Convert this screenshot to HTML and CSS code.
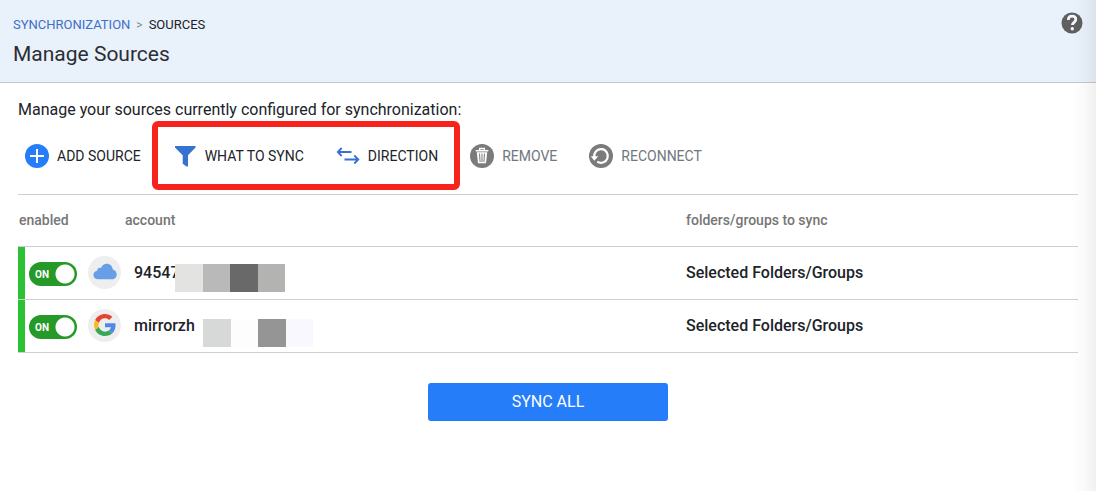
FILE: index.html
```html
<!DOCTYPE html>
<html lang="en">
<head>
<meta charset="utf-8">
<meta name="viewport" content="width=device-width, initial-scale=1">
<title>Manage Sources</title>
<link rel="stylesheet" href="styles.css">
</head>
<body>
<header class="page-header">
  <div>
    <nav class="breadcrumb" aria-label="Breadcrumb">
      <a href="#sync">SYNCHRONIZATION</a><span class="separator">&gt;</span><span>SOURCES</span>
    </nav>
    <h1 class="title">Manage Sources</h1>
  </div>
  <button class="help" type="button" aria-label="Help">
    <svg width="22" height="22" viewBox="0 0 22 22"><circle cx="11" cy="11" r="10.5" fill="#5f5f5f"/><path d="M7.300 8C7.300 5.500 8.900 4.200 11.100 4.200c2.200 0 3.700 1.300 3.700 3.300 0 2.800-3.400 2.900-3.400 5.600" fill="none" stroke="#f4f8fc" stroke-width="2.700"/><circle cx="11.300" cy="16.800" r="1.700" fill="#f4f8fc"/></svg>
  </button>
</header>
<main class="content">
  <p class="intro">Manage your sources currently configured for synchronization:</p>
  <div class="toolbar">
    <button class="tool" type="button">
      <svg width="24" height="24" viewBox="0 0 24 24"><circle cx="12" cy="12" r="12" fill="#267dfa"/><path d="M12 5v14M5 12h14" stroke="#fff" stroke-width="2"/></svg>
      ADD SOURCE
    </button>
    <div class="highlighted">
      <button class="tool" type="button">
        <svg width="24" height="24" viewBox="0 0 24 24"><path d="M2 2h20.500v1.500L15 11.300V22.500h-1.500L9.700 19.800V11.300L2 3.500z" fill="#3672d0"/></svg>
        WHAT TO SYNC
      </button>
      <button class="tool" type="button">
        <svg width="24" height="24" viewBox="0 0 24 24"><path d="M5.700 4 1.800 8l3.900 4M2 8h13.500M18.300 11.500l4 4-4 4M22 15.500H8.500" fill="none" stroke="#3672d0" stroke-width="1.800"/></svg>
        DIRECTION
      </button>
    </div>
    <button class="tool muted" type="button">
      <svg width="24" height="24" viewBox="0 0 24 24"><circle cx="12" cy="12" r="12" fill="#7b7b7b"/><path d="M9.700 6V4.600h4.600V6M5.700 6.800h12.600" fill="none" stroke="#fff" stroke-width="1.500"/><path d="M6.800 8.300h10.400L16 19.300H8z" fill="#fff"/><path d="M9.500 9.500l.6 8.500M12 9.500V18M14.500 9.500l-.6 8.500" stroke="#7b7b7b" stroke-width="1"/></svg>
      REMOVE
    </button>
    <button class="tool muted" type="button">
      <svg width="24" height="24" viewBox="0 0 24 24"><circle cx="12" cy="12" r="12" fill="#7b7b7b"/><path d="M5.300 13A6.800 6.800 0 1 1 8.200 17.600" fill="none" stroke="#fff" stroke-width="2.200"/><path d="M1.800 12.300h7.400L5.300 16.800z" fill="#fff"/></svg>
      RECONNECT
    </button>
  </div>
  <table class="sources">
    <thead>
      <tr><th class="col-enabled" scope="col">enabled</th><th class="col-account" scope="col">account</th><th scope="col">folders/groups to sync</th></tr>
    </thead>
    <tbody>
      <tr>
        <td class="status"><label class="switch"><input type="checkbox" role="switch" aria-label="Enable iCloud source" checked><span class="on">ON</span></label></td>
        <td>
          <div class="account">
            <span class="avatar"><svg width="24" height="24" viewBox="0 0 24 24"><path d="M5 19.300C2.200 19.300.400 17.500.400 15c0-2.200 1.500-3.900 3.700-4.200C4.200 8.500 6 7.300 8.100 7.800 9.200 5.200 11.300 3.800 13.800 3.800c3.300 0 5.700 2.300 6 5.700 2.400.700 3.900 2.500 3.900 4.900 0 2.900-2 4.900-4.900 4.900z" fill="#669ee8"/></svg></span>
            <span class="name">94547<span class="mosaic first"><i class="m1"></i><i class="m2"></i><i class="m3"></i><i class="m4"></i></span></span>
          </div>
        </td>
        <td>Selected Folders/Groups</td>
      </tr>
      <tr>
        <td class="status"><label class="switch"><input type="checkbox" role="switch" aria-label="Enable Google source" checked><span class="on">ON</span></label></td>
        <td>
          <div class="account">
            <span class="avatar"><svg width="22" height="22" viewBox="0 0 48 48"><path fill="#e64335" d="M24 9.500c3.540 0 6.710 1.220 9.210 3.600l6.850-6.850C35.900 2.380 30.470 0 24 0 14.620 0 6.510 5.380 2.560 13.220l7.980 6.190C12.430 13.720 17.740 9.500 24 9.500z"/><path fill="#5087ed" d="M46.980 24.550c0-1.570-.15-3.090-.38-4.550H24v9.020h12.940c-.58 2.960-2.260 5.480-4.780 7.180l7.730 6c4.510-4.180 7.090-10.360 7.090-17.650z"/><path fill="#f8bb20" d="M10.530 28.590c-.48-1.450-.76-2.990-.76-4.590s.27-3.140.76-4.590l-7.980-6.190C.92 16.460 0 20.120 0 24c0 3.880.92 7.540 2.560 10.780l7.970-6.190z"/><path fill="#3aa658" d="M24 48c6.480 0 11.930-2.130 15.890-5.810l-7.730-6c-2.150 1.450-4.920 2.300-8.160 2.300-6.260 0-11.570-4.220-13.470-9.910l-7.980 6.190C6.510 42.620 14.620 48 24 48z"/></svg></span>
            <span class="name">mirrorzh<span class="mosaic second"><i class="m5"></i><i class="m6"></i><i class="m7"></i><i class="m8"></i></span></span>
          </div>
        </td>
        <td>Selected Folders/Groups</td>
      </tr>
    </tbody>
  </table>
  <button class="sync-all" type="button">SYNC ALL</button>
</main>
</body>
</html>
```
FILE: styles.css
```css
* { box-sizing: border-box; }

body {
  margin: 0;
  min-height: 100vh;
  position: relative;
  background: #fff;
  color: #202329;
  font-family: Roboto, "Liberation Sans", sans-serif;
  font-size: 16px;
}

/* soft shade along the right edge of the window */
body::after {
  content: "";
  position: absolute;
  top: 0;
  right: 0;
  bottom: 0;
  width: 24px;
  background: linear-gradient(to right, rgba(0, 0, 0, 0), rgba(0, 0, 0, 0.02) 50%, rgba(0, 0, 0, 0.06));
  pointer-events: none;
}

button {
  border: 0;
  padding: 0;
  background: none;
  color: inherit;
  font: inherit;
  cursor: pointer;
}

svg { display: block; flex: none; }

.page-header {
  display: flex;
  justify-content: space-between;
  align-items: flex-start;
  padding: 12px 13px 13px;
  background: #e9f1fa;
  border-bottom: 1px solid #c3c8cd;
}

.breadcrumb {
  display: flex;
  align-items: center;
  font-size: 13px;
  line-height: 26px;
}

.breadcrumb a { color: #3f6fcb; text-decoration: none; }
.separator { margin: 0 6px; color: #85898e; font-size: 12px; }

.title {
  margin: 2px 0 0;
  color: #2b2e32;
  font-size: 21px;
  font-weight: 400;
  line-height: 29px;
}

.content { padding: 15px 18px; }

.intro { margin: 0; line-height: 24px; }

.toolbar {
  display: flex;
  align-items: center;
  gap: 32px;
  padding: 22px 7px 26px;
}

.tool {
  display: flex;
  align-items: center;
  gap: 8px;
  font-size: 14px;
  line-height: 24px;
  white-space: nowrap;
}

.muted { color: #70767d; }

.highlighted {
  position: relative;
  display: flex;
  gap: 32px;
}

.highlighted::after {
  content: "";
  position: absolute;
  inset: -23px -22px -22px -21px;
  border: 6px solid #f8231d;
  border-radius: 6px;
  pointer-events: none;
}

.sources {
  width: 100%;
  border-collapse: separate;
  border-spacing: 0;
  border-top: 1px solid #cfcfcf;
  table-layout: fixed;
}

th, td {
  height: 53px;
  padding: 0 0 2px;
  border-bottom: 1px solid #cfcfcf;
  text-align: left;
  font-weight: 500;
}

th {
  height: 52px;
  color: #767676;
  font-size: 14px;
}

th:first-child { padding-left: 1px; }
.col-enabled { width: 70px; }
.col-account { width: 598px; padding-left: 37px; }

.status {
  background: linear-gradient(to right, #2ac132 7px, transparent 7px);
  padding: 2px 0 0 11px;
}

.switch { position: relative; display: block; width: 48px; height: 24px; }

.switch input {
  appearance: none;
  display: block;
  width: 48px;
  height: 24px;
  margin: 0;
  border-radius: 12px;
  background: radial-gradient(circle at 36px 12px, #fff 9px, transparent 10px) #259a29;
}

.on {
  position: absolute;
  left: 6px;
  top: 0;
  color: #fff;
  font-size: 10px;
  font-weight: 700;
  line-height: 25px;
  pointer-events: none;
}

.account { display: flex; align-items: center; gap: 13px; }

.avatar {
  display: grid;
  place-items: center;
  width: 33px;
  height: 33px;
  border-radius: 50%;
  background: #eeeeee;
}

.name { position: relative; }

/* blocks that conceal the private part of an account name */
.mosaic { position: absolute; display: flex; width: 110px; height: 28px; }
.mosaic i { flex: 1; }
.first { left: 41px; top: 1px; }
.second { left: 69px; top: 3px; }
.m1 { background: #e3e3e2; }
.m2 { background: #b9b9b9; }
.m3 { background: #696969; }
.m4 { background: #b3b3b2; }
.m5 { background: #d7d9d8; }
.m6 { background: #fdfdfd; }
.m7 { background: #959595; }
.m8 { background: #f8f8fe; }

.sync-all {
  display: block;
  width: 240px;
  margin: 30px auto 0;
  border-radius: 3px;
  background: #267dfa;
  color: #fff;
  line-height: 38px;
}
```
